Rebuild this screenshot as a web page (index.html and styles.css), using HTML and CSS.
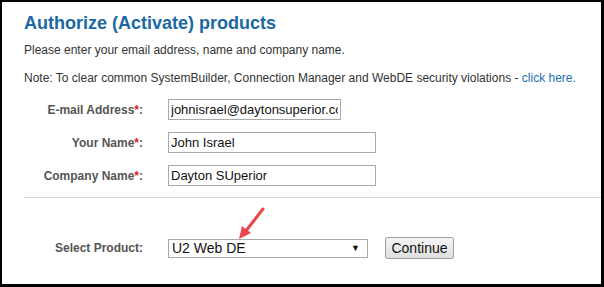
FILE: index.html
```html
<!DOCTYPE html>
<html lang="en">
<head>
    <meta charset="UTF-8">
    <title>Authorize (Activate) products</title>
    <link rel="stylesheet" href="styles.css">
</head>
<body>
    <div class="frame">
        <div class="content">
            <h1 class="page-title">Authorize (Activate) products</h1>
            <p class="intro">Please enter your email address, name and company name.</p>
            <p class="note">Note: To clear common SystemBuilder, Connection Manager and WebDE security violations - <a href="#">click here.</a></p>

            <div class="form-grid">
                <label class="field-label">E-mail Address<span class="req">*</span>:</label>
                <input class="text-input short" type="text" value="johnisrael@daytonsuperior.com">

                <label class="field-label">Your Name<span class="req">*</span>:</label>
                <input class="text-input" type="text" value="John Israel">

                <label class="field-label">Company Name<span class="req">*</span>:</label>
                <input class="text-input" type="text" value="Dayton SUperior">
            </div>
        </div>

        <hr class="divider">

        <div class="product-row">
            <label class="field-label">Select Product:</label>
            <div class="select-box">
                <span>U2 Web DE</span>
                <span class="caret">&#9660;</span>
                <svg class="arrow" width="36" height="36" viewBox="0 0 36 36">
                    <path d="M30 3 L12 26" stroke="#e8474c" stroke-width="3" stroke-linecap="round" fill="none"/>
                    <path d="M6 33 L9 20 L18 27 Z" fill="#e8474c"/>
                </svg>
            </div>
            <button class="btn">Continue</button>
        </div>
    </div>
</body>
</html>
```

FILE: styles.css
```css
* {
    margin: 0;
    padding: 0;
    box-sizing: border-box;
}

body {
    font-family: "Liberation Sans", Arial, sans-serif;
    background: #000;
    color: #333;
}

.frame {
    height: 287px;
    background: #fff;
    border-style: solid;
    border-color: #000;
    border-width: 2px 3px 3px 2px;
}

.content {
    padding: 10px 0 0 22px;
}

.page-title {
    color: #1b68a3;
    font-size: 18px;
    font-weight: bold;
    line-height: 22px;
}

.intro,
.note {
    font-size: 12px;
    line-height: 14px;
}

.intro {
    margin-top: 9px;
}

.note {
    margin-top: 14px;
}

.note a {
    color: #1d6fb0;
    text-decoration: none;
}

.form-grid {
    display: grid;
    grid-template-columns: 119px auto;
    column-gap: 25px;
    row-gap: 12px;
    align-items: center;
    justify-items: start;
    margin-top: 14px;
}

.field-label {
    justify-self: end;
    font-size: 12px;
    font-weight: bold;
    color: #555;
}

.req {
    color: #e02020;
}

.text-input {
    width: 208px;
    height: 21px;
    border: 1px solid #a9a9a9;
    padding: 0 2px;
    font-family: inherit;
    font-size: 13px;
    color: #111;
    outline: none;
}

.text-input.short {
    width: 173px;
}

.divider {
    border: none;
    border-top: 1px solid #d6d6d6;
    margin: 11px 0 0 22px;
}

.product-row {
    display: flex;
    align-items: center;
    padding: 39px 0 0 22px;
}

.product-row .field-label {
    width: 119px;
    text-align: right;
    margin-right: 25px;
}

.select-box {
    position: relative;
    width: 200px;
    height: 19px;
    border: 1px solid #a9a9a9;
    display: flex;
    align-items: center;
    justify-content: space-between;
    padding: 0 7px 0 3px;
    font-size: 14px;
    color: #111;
}

.caret {
    font-size: 9px;
}

.arrow {
    position: absolute;
    left: 64px;
    top: -34px;
}

.btn {
    margin-left: 17px;
    width: 69px;
    height: 22px;
    font-family: inherit;
    font-size: 14px;
    color: #111;
    background: linear-gradient(#f5f5f5, #dedede);
    border: 1px solid #a0a0a0;
    border-radius: 2px;
}
```
